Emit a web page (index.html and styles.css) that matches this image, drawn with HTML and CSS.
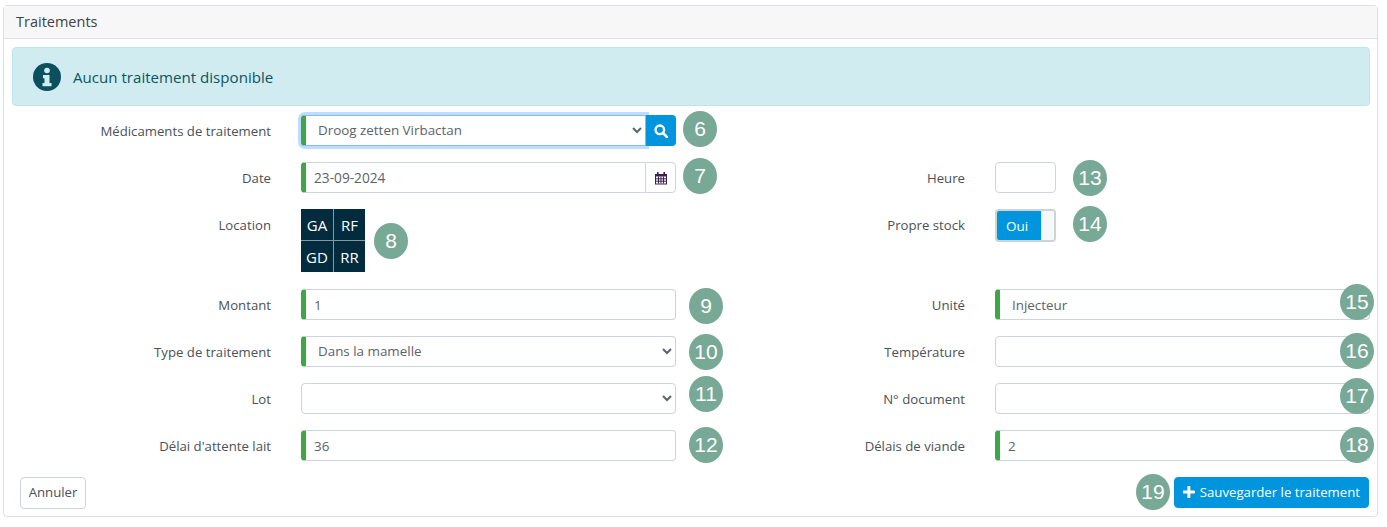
FILE: index.html
```html
<!DOCTYPE html>
<html lang="fr">
<head>
<meta charset="utf-8">
<title>Traitements</title>
<link rel="stylesheet" href="styles.css">
</head>
<body>
<section class="panel">
  <header class="panel-head">Traitements</header>
  <div class="panel-body">
    <div class="alert">
      <svg class="alert-icon" viewBox="0 0 28 28" width="28" height="28">
        <circle cx="14" cy="14" r="14" fill="#0c4f5e"/>
        <circle cx="14" cy="7.5" r="2.8" fill="#d1ecf1"/>
        <path d="M10 12h6.500v8H18.500v3.200H9.500V20h2v-4.800h-1.500z" fill="#d1ecf1"/>
      </svg>
      <span>Aucun traitement disponible</span>
    </div>
    <form class="form-grid">
      <label class="lbl">Médicaments de traitement</label>
      <div class="ctl">
        <div class="group">
          <select class="field req focus"><option>Droog zetten Virbactan</option></select>
          <button type="button" class="addon-btn" aria-label="Rechercher">
            <svg viewBox="0 0 14 14" width="14" height="14"><circle cx="5.800" cy="5.800" r="4.300" fill="none" stroke="#fff" stroke-width="2.300"/><path d="M9 9l3.800 3.800" stroke="#fff" stroke-width="2.600" stroke-linecap="round"/></svg>
          </button>
        </div>
        <span class="badge b6">6</span>
      </div>
      <div class="span2"></div>

      <label class="lbl">Date</label>
      <div class="ctl">
        <div class="group">
          <input class="field req joined date" value="23-09-2024">
          <span class="addon">
            <svg viewBox="0 0 14 14" width="14" height="14"><path d="M1 3h12v10.500H1z" fill="#3d2050"/><path d="M2 5.500h10v7H2z" fill="#fff"/><path d="M4.500 5.500v7M7 5.500v7M9.500 5.500v7M2 7.800h10M2 10.200h10" stroke="#3d2050" stroke-width="1"/><path d="M3.800 1v3M10.200 1v3" stroke="#3d2050" stroke-width="1.600"/></svg>
          </span>
        </div>
        <span class="badge b7">7</span>
      </div>
      <label class="lbl">Heure</label>
      <div class="ctl">
        <input class="field short">
        <span class="badge b13">13</span>
      </div>

      <label class="lbl">Location</label>
      <div class="ctl tall">
        <div class="tile">
          <span>GA</span><span>RF</span><span>GD</span><span>RR</span>
        </div>
        <span class="badge b8">8</span>
      </div>
      <label class="lbl">Propre stock</label>
      <div class="ctl tall">
        <div class="toggle"><span class="toggle-on">Oui</span><span class="toggle-knob"></span></div>
        <span class="badge b14">14</span>
      </div>

      <label class="lbl">Montant</label>
      <div class="ctl">
        <input class="field req" value="1">
        <span class="badge b9">9</span>
      </div>
      <label class="lbl">Unité</label>
      <div class="ctl">
        <input class="field req wide-pad" value="Injecteur">
        <span class="badge b15">15</span>
      </div>

      <label class="lbl">Type de traitement</label>
      <div class="ctl">
        <select class="field req"><option>Dans la mamelle</option></select>
        <span class="badge b10">10</span>
      </div>
      <label class="lbl">Température</label>
      <div class="ctl">
        <input class="field">
        <span class="badge b16">16</span>
      </div>

      <label class="lbl">Lot</label>
      <div class="ctl">
        <select class="field"><option></option></select>
        <span class="badge b11">11</span>
      </div>
      <label class="lbl">N° document</label>
      <div class="ctl">
        <input class="field">
        <span class="badge b17">17</span>
      </div>

      <label class="lbl">Délai d'attente lait</label>
      <div class="ctl">
        <input class="field req" value="36">
        <span class="badge b12">12</span>
      </div>
      <label class="lbl">Délais de viande</label>
      <div class="ctl">
        <input class="field req" value="2">
        <span class="badge b18">18</span>
      </div>
    </form>
    <footer class="actions">
      <button type="button" class="btn btn-cancel">Annuler</button>
      <div class="save-wrap">
        <span class="badge b19">19</span>
        <button type="button" class="btn btn-primary">
          <svg viewBox="0 0 12 12" width="12" height="12"><path d="M6 1v10M1 6h10" stroke="#fff" stroke-width="3" stroke-linecap="round"/></svg>
          Sauvegarder le traitement
        </button>
      </div>
    </footer>
  </div>
</section>
</body>
</html>
```
FILE: styles.css
```css
* { box-sizing: border-box; }
html, body { margin: 0; padding: 0; background: #fff; }
body {
  padding: 5px 9px 0 3px;
  font-family: "Open Sans", "Noto Sans", "Liberation Sans", sans-serif;
  font-size: 13.200px;
  color: #495057;
}
.panel {
  border: 1px solid #dcdfe3;
  border-radius: 4px;
  height: 512px;
}
.panel-head {
  height: 33px;
  padding: 6px 12px 0;
  font-size: 14.500px;
  color: #3c4247;
  background: #f7f7f7;
  border-bottom: 1px solid #dcdfe3;
}
.panel-body { padding: 8px 7px 0 8px; }
.alert {
  display: flex;
  align-items: center;
  gap: 12px;
  height: 59px;
  padding: 0 20px;
  background: #d1ecf1;
  border: 1px solid #bee5eb;
  border-radius: 4px;
  color: #0c5460;
  font-size: 15.100px;
}
.alert-icon { flex: none; }
.form-grid {
  display: grid;
  grid-template-columns: 259px 375px 259px 375px;
  column-gap: 30px;
  row-gap: 16px;
  margin-top: 9px;
}
.span2 { grid-column: span 2; }
.lbl {
  align-self: start;
  height: 31px;
  padding-top: 6px;
  line-height: 20px;
  text-align: right;
  color: #4b5157;
}
.ctl { position: relative; height: 31px; }
.ctl.tall { height: 64px; }
.group { display: flex; height: 31px; }
.field {
  display: block;
  width: 100%;
  height: 31px;
  padding: 0 8px;
  font: inherit;
  font-size: 13.400px;
  color: #5c6369;
  background: #fff;
  border: 1px solid #ced4da;
  border-radius: 4px;
}
.field.date { font-size: 13.700px; }
.field.req { border-left: 5px solid #3fa648; }
.field.wide-pad { padding-left: 12px; }
select.field { padding: 0 8px 2px 8px; }
.field.focus {
  border-color: #80bdff;
  border-radius: 4px 0 0 4px;
  box-shadow: 0 0 0 3px #bfdcff;
  border-left-color: #3fa648;
}
.field.joined { border-radius: 4px 0 0 4px; border-right: 0; }
.field.short { width: 61px; }
.addon-btn {
  flex: none;
  width: 30px;
  height: 31px;
  padding: 0;
  border: 0;
  border-radius: 0 4px 4px 0;
  background: #0095dc;
  display: flex;
  align-items: center;
  justify-content: center;
  position: relative;
}
.addon {
  flex: none;
  width: 31px;
  height: 31px;
  display: flex;
  align-items: center;
  justify-content: center;
  border: 1px solid #ced4da;
  border-radius: 0 4px 4px 0;
  background: #fff;
}
.tile {
  display: grid;
  grid-template-columns: 33px 31px;
  grid-template-rows: 32px 31px;
  width: 64px;
  height: 63px;
  background: #022c3e;
}
.tile span {
  display: flex;
  align-items: center;
  justify-content: center;
  color: #fff;
  font-size: 15px;
  border-color: #8a979e;
  border-style: solid;
  border-width: 0;
}
.tile span:nth-child(odd) { border-right-width: 1px; }
.tile span:nth-child(-n+2) { border-bottom-width: 1px; }
.toggle {
  display: flex;
  width: 61px;
  height: 33px;
  border: 2px solid #d0d3d6;
  border-radius: 4px;
  overflow: hidden;
}
.toggle-on {
  width: 44px;
  display: flex;
  align-items: center;
  padding-left: 9px;
  background: #0095dc;
  color: #fff;
  font-size: 13.500px;
}
.toggle-knob { flex: 1; background: #f6f7f9; border-left: 1px solid #e3e5e8; }
.badge {
  position: absolute;
  display: flex;
  align-items: center;
  justify-content: center;
  width: 34px;
  height: 36px;
  border-radius: 50%;
  background: #78a896;
  color: #fff;
  font-family: "Liberation Sans", Arial, sans-serif;
  font-size: 21px;
}
.b6 { left: 382px; top: -4px; }
.b7 { left: 382px; top: -4px; }
.b8 { left: 73px; top: 14px; }
.b9, .b10, .b11, .b12 { left: 388px; }
.b9 { top: -1px; }
.b10 { top: -2px; }
.b11 { top: -7px; }
.b12 { top: -3px; }
.b13 { left: 78px; top: -2px; }
.b14 { left: 78px; top: -3px; }
.b15, .b16, .b17, .b18 { left: 345px; }
.b15 { top: -5px; }
.b16 { top: -3px; }
.b17 { top: -5px; }
.b18 { top: -3px; }
.actions {
  display: flex;
  justify-content: space-between;
  margin-top: 16px;
  padding: 0 1px 0 8px;
}
.save-wrap { position: relative; }
.b19 { left: -38px; top: -3px; }
.btn {
  height: 32px;
  padding: 0 8px 2px;
  font: inherit;
  color: #495057;
  background: #fff;
  border: 1px solid #ced4da;
  border-radius: 4px;
  white-space: nowrap;
}
.btn-cancel { width: 66px; padding: 0 0 2px; }
.btn-primary {
  display: flex;
  align-items: center;
  gap: 5px;
  height: 31px;
  width: 195px;
  color: #fff;
  background: #0095dc;
  border-color: #0095dc;
}
```
